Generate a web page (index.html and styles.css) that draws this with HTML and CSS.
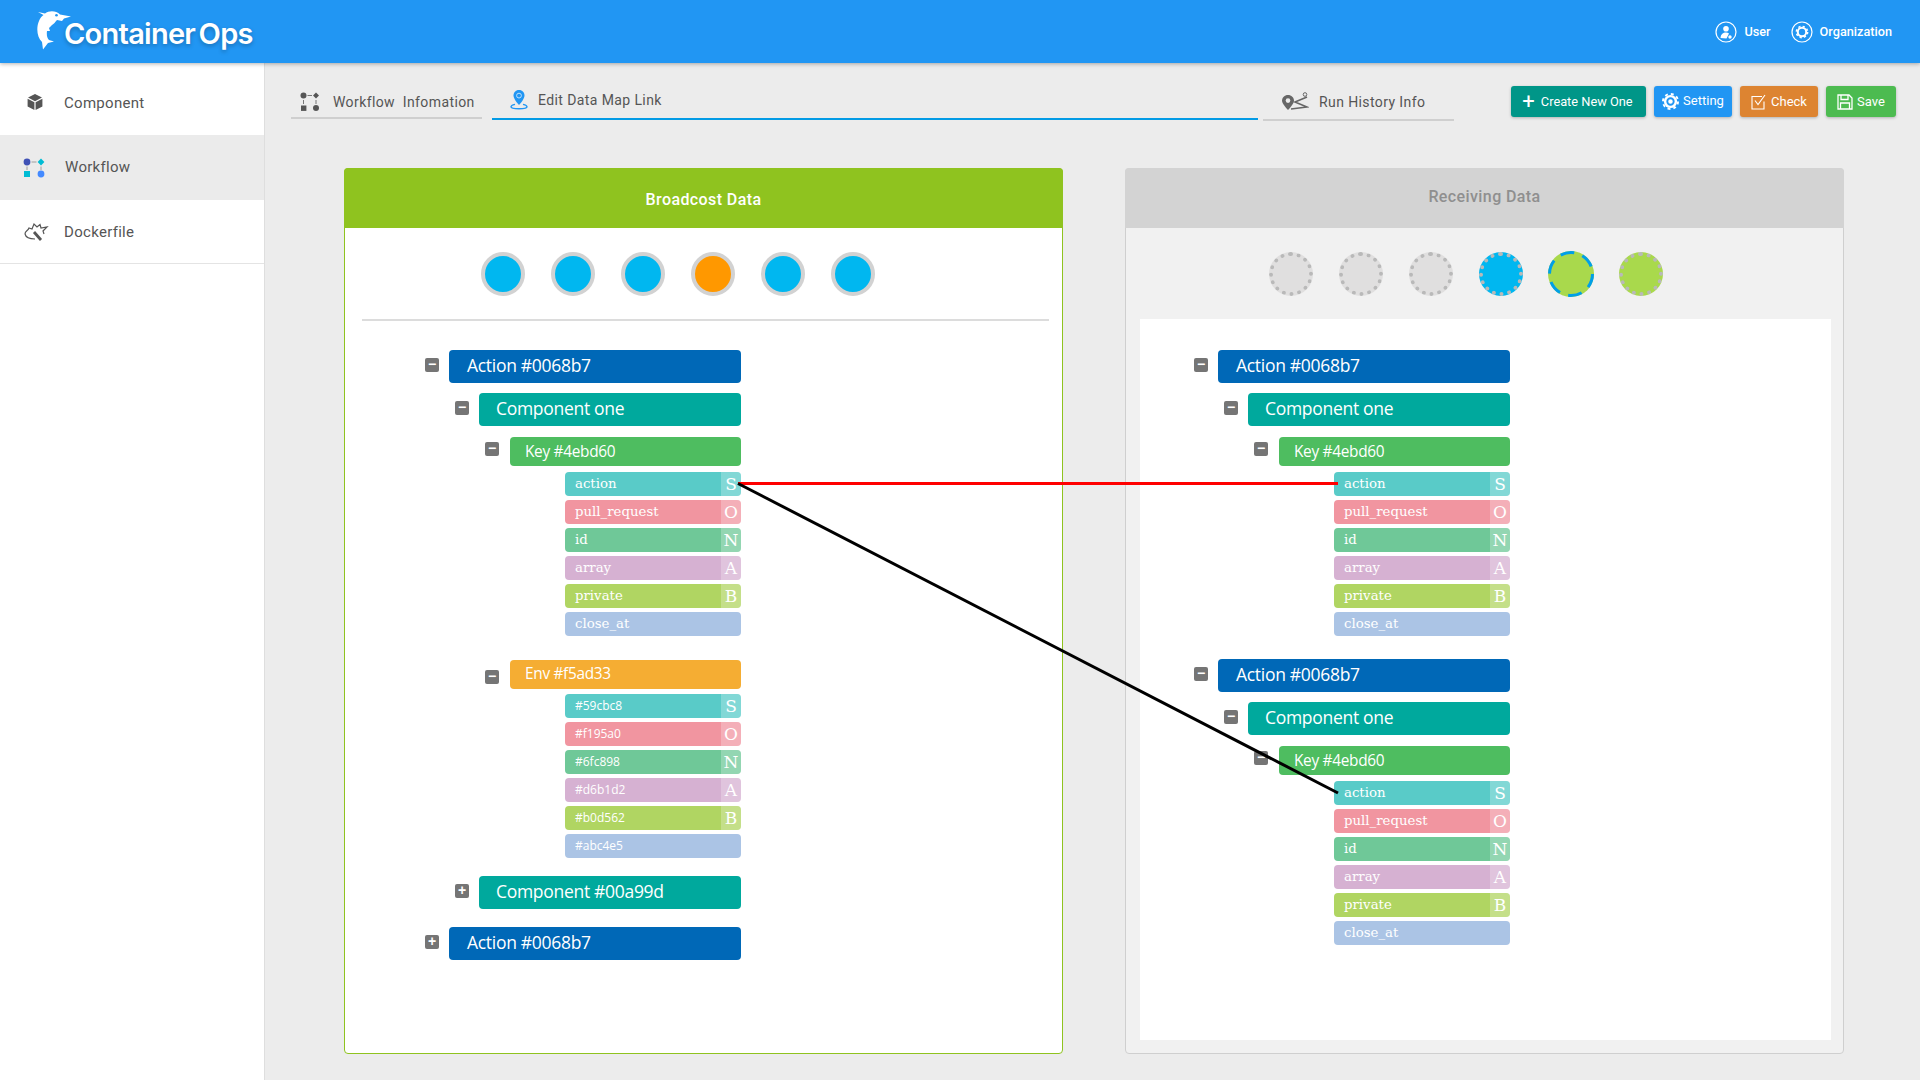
FILE: index.html
```html
<!DOCTYPE html>
<html lang="en">
  <head>
    <meta charset="UTF-8" />
    <title>Container Ops</title>
    <link rel="stylesheet" href="styles.css">
  </head>
  <body>
    <header class="topbar">
      <div class="logo">
        <svg class="logo-mark" viewBox="0 0 34 40" width="34" height="40">
          <path fill="#fff" d="M1 1 L8 2.5 C12 -0.5 19 -0.5 23 3.5 L34 5.5 L27 7.5 L25 10 L20 9 C18 11 17 13 15 14 L12 17 L13 20 L10 20 C9.5 24 10 27 12 29 L17 30.5 L11 32 L6 38.5 L5 31 C0 26 -1 17 2 10 C3 7 5 5 6.5 4 Z" />
          <circle cx="19.5" cy="4.2" r="1.3" fill="#2196f3" />
        </svg>
        <span class="logo-text">Container Ops</span>
      </div>
      <nav class="top-links">
        <a class="top-link">
          <svg viewBox="0 0 22 22" width="22" height="22" fill="none" stroke="#fff" stroke-width="1.2">
            <circle cx="11" cy="11" r="10" />
            <circle cx="11" cy="7.8" r="2.8" fill="#fff" stroke="none" />
            <path d="M5.5 17 C6 13 8 11.6 11 11.6 C12.2 11.6 13.2 12 14 12.6 L11.5 17.6 Z" fill="#fff" stroke="none" />
            <circle cx="15" cy="16" r="1.7" fill="#fff" stroke="none" />
          </svg>
          User
        </a>
        <a class="top-link">
          <svg viewBox="0 0 22 22" width="22" height="22" fill="none" stroke="#fff">
            <circle cx="11" cy="11" r="10" stroke-width="1.2" />
            <circle cx="11" cy="11" r="4.2" stroke-width="2" />
            <circle cx="11" cy="11" r="5.6" stroke-width="1.6" stroke-dasharray="2.2 2.2" />
          </svg>
          Organization
        </a>
      </nav>
    </header>

    <div class="layout">
      <aside class="sidebar">
        <a class="side-item">
          <svg class="side-icon" viewBox="0 0 18 18" width="18" height="18">
            <path fill="#555" d="M9 1 L16 4.6 L9 8.2 L2 4.6 Z M1.6 5.8 L8.4 9.3 L8.4 17 L1.6 13.4 Z M16.4 5.8 L9.6 9.3 L9.6 17 L16.4 13.4 Z" />
          </svg>
          Component
        </a>
        <a class="side-item side-item-active">
          <svg class="side-icon" viewBox="0 0 22 20" width="22" height="20">
            <circle cx="4" cy="4" r="3.4" fill="#3f51b5" />
            <path d="M18 0.6 L21.4 4 L18 7.4 L14.6 4 Z" fill="#00bcd4" />
            <rect x="1" y="13" width="6" height="6" fill="#00bcd4" />
            <circle cx="18" cy="16" r="3.4" fill="#448aff" />
            <path d="M8.5 4 H13.5 M4 8.5 V12 M18 8.5 V12" stroke="#9e9e9e" stroke-width="1" />
          </svg>
          Workflow
        </a>
        <a class="side-item side-item-last">
          <svg class="side-icon" viewBox="0 0 26 20" width="26" height="20" fill="none" stroke="#555" stroke-width="1.2">
            <path d="M2 12 C2 9 5 9 6 6 L9 7 L11 2 L14 5 L17 2.5 L18 6 L24 5 L20 9 L21 12" />
            <path d="M2 12 C3 16 7 17 12 17" />
            <path d="M11 10 L18 18" stroke-width="2.8" />
          </svg>
          Dockerfile
        </a>
      </aside>

      <main class="content">
        <div class="toolbar">
          <a class="tab tab-info">
            <svg viewBox="0 0 20 20" width="20" height="20">
              <circle cx="3.5" cy="3.5" r="3" fill="#555" />
              <path d="M16 0.5 L19 3.5 L16 6.5 L13 3.5 Z" fill="#555" />
              <rect x="1" y="13.5" width="5.4" height="5.4" fill="#555" />
              <circle cx="16" cy="16" r="3" fill="#555" />
              <path d="M7.5 3.5 H12 M3.5 8 V12 M16 8 V12" stroke="#777" stroke-width="1" />
            </svg>
            Workflow&nbsp; Infomation
          </a>
          <a class="tab tab-active">
            <svg viewBox="0 0 18 20" width="18" height="20">
              <path fill="#2196f3" d="M9 0 C5.5 0 3.5 2.6 3.5 5.6 C3.5 9.4 9 15 9 15 C9 15 14.5 9.4 14.5 5.6 C14.5 2.6 12.5 0 9 0 Z" />
              <circle cx="9" cy="5.6" r="2.4" fill="none" stroke="#bfe0fb" stroke-width="1" />
              <path d="M5 14.4 C2.6 15 1 15.8 1 16.8 C1 18 4.6 18.8 9 18.8 C13.4 18.8 17 18 17 16.8 C17 15.8 15.4 15 13 14.4" fill="none" stroke="#2196f3" stroke-width="1.4" />
            </svg>
            Edit Data Map Link
          </a>
          <a class="tab tab-history">
            <svg viewBox="0 0 28 20" width="28" height="20">
              <path fill="#666" d="M7 3 C3.6 3 1 5.6 1 8.8 C1 12 7 18 7 18 C7 18 13 12 13 8.8 C13 5.6 10.4 3 7 3 Z" />
              <circle cx="7" cy="8.6" r="2.3" fill="#ececec" />
              <path d="M10 17 L26 15 L14 10 L26 5" fill="none" stroke="#666" stroke-width="1.6" />
              <circle cx="24" cy="2.5" r="1.8" fill="none" stroke="#666" stroke-width="1" />
            </svg>
            Run History Info
          </a>
          <div class="actions">
            <a class="btn btn-create"><span class="btn-plus">+</span>Create New One</a>
            <a class="btn btn-setting">
              <svg viewBox="0 0 18 18" width="17" height="17">
                <circle cx="9" cy="9" r="7" fill="#fff" />
                <circle cx="9" cy="9" r="8" fill="none" stroke="#fff" stroke-width="2" stroke-dasharray="3.1 3.2" />
                <circle cx="9" cy="9" r="3.4" fill="#fff" stroke="#2196f3" stroke-width="2" />
              </svg>
              <span class="btn-label-up">Setting</span>
            </a>
            <a class="btn btn-check">
              <svg viewBox="0 0 16 16" width="16" height="16" fill="none" stroke="#fff" stroke-width="1.1">
                <path d="M13 7.5 V15 H1 V2.5 H11" />
                <path d="M4 6.5 L7 10.5 L14 1" />
              </svg>
              Check
            </a>
            <a class="btn btn-save">
              <svg viewBox="0 0 16 16" width="16" height="16" fill="none" stroke="#fff" stroke-width="1.3">
                <path d="M1 1 H12 L15 4 V15 H1 Z" />
                <path d="M4 1 V5.5 H11 V1 M3.5 15 V9 H12.5 V15" />
              </svg>
              Save
            </a>
          </div>
        </div>

        <div class="panels">
          <section class="panel panel-send">
            <h2 class="panel-head">Broadcost Data</h2>
            <div class="dots">
              <span class="dot dot-blue"></span>
              <span class="dot dot-blue"></span>
              <span class="dot dot-blue"></span>
              <span class="dot dot-orange"></span>
              <span class="dot dot-blue"></span>
              <span class="dot dot-blue"></span>
            </div>
            <div class="tree">
              <div class="row lvl1"><i class="toggle">&minus;</i><div class="bar bar-action">Action #0068b7</div></div>
              <div class="row lvl2"><i class="toggle">&minus;</i><div class="bar bar-comp">Component one</div></div>
              <div class="row lvl3"><i class="toggle">&minus;</i><div class="bar bar-key">Key #4ebd60</div></div>
              <div class="fields">
                <div class="field f-s"><span>action</span><b>S</b></div>
                <div class="field f-o"><span>pull_request</span><b>O</b></div>
                <div class="field f-n"><span>id</span><b>N</b></div>
                <div class="field f-a"><span>array</span><b>A</b></div>
                <div class="field f-b"><span>private</span><b>B</b></div>
                <div class="field f-c"><span>close_at</span></div>
              </div>
              <div class="row lvl3 row-env"><i class="toggle">&minus;</i><div class="bar bar-env">Env #f5ad33</div></div>
              <div class="fields fields-env">
                <div class="field f-s"><span>#59cbc8</span><b>S</b></div>
                <div class="field f-o"><span>#f195a0</span><b>O</b></div>
                <div class="field f-n"><span>#6fc898</span><b>N</b></div>
                <div class="field f-a"><span>#d6b1d2</span><b>A</b></div>
                <div class="field f-b"><span>#b0d562</span><b>B</b></div>
                <div class="field f-c"><span>#abc4e5</span></div>
              </div>
              <div class="row lvl2 row-closed"><i class="toggle">+</i><div class="bar bar-comp">Component #00a99d</div></div>
              <div class="row lvl1 row-closed"><i class="toggle">+</i><div class="bar bar-action">Action #0068b7</div></div>
            </div>
          </section>

          <section class="panel panel-recv">
            <h2 class="panel-head">Receiving Data</h2>
            <div class="dots">
              <span class="dot dot-empty"></span>
              <span class="dot dot-empty"></span>
              <span class="dot dot-empty"></span>
              <span class="dot dot-empty dot-fill-blue"></span>
              <svg class="dot-ring" viewBox="0 0 46 46" width="46" height="46">
                <circle cx="23" cy="23" r="23" fill="#a9d94c" />
                <circle cx="23" cy="23" r="21.5" fill="none" stroke="#009fe8" stroke-width="3" stroke-dasharray="14 8.5" />
              </svg>
              <span class="dot dot-empty dot-fill-green"></span>
            </div>
            <div class="tree">
              <div class="row lvl1"><i class="toggle">&minus;</i><div class="bar bar-action">Action #0068b7</div></div>
              <div class="row lvl2"><i class="toggle">&minus;</i><div class="bar bar-comp">Component one</div></div>
              <div class="row lvl3"><i class="toggle">&minus;</i><div class="bar bar-key">Key #4ebd60</div></div>
              <div class="fields">
                <div class="field f-s"><span>action</span><b>S</b></div>
                <div class="field f-o"><span>pull_request</span><b>O</b></div>
                <div class="field f-n"><span>id</span><b>N</b></div>
                <div class="field f-a"><span>array</span><b>A</b></div>
                <div class="field f-b"><span>private</span><b>B</b></div>
                <div class="field f-c"><span>close_at</span></div>
              </div>
              <div class="row lvl1 row-second"><i class="toggle">&minus;</i><div class="bar bar-action">Action #0068b7</div></div>
              <div class="row lvl2"><i class="toggle">&minus;</i><div class="bar bar-comp">Component one</div></div>
              <div class="row lvl3"><i class="toggle">&minus;</i><div class="bar bar-key">Key #4ebd60</div></div>
              <div class="fields">
                <div class="field f-s"><span>action</span><b>S</b></div>
                <div class="field f-o"><span>pull_request</span><b>O</b></div>
                <div class="field f-n"><span>id</span><b>N</b></div>
                <div class="field f-a"><span>array</span><b>A</b></div>
                <div class="field f-b"><span>private</span><b>B</b></div>
                <div class="field f-c"><span>close_at</span></div>
              </div>
            </div>
          </section>
        </div>
      </main>
    </div>

    <!-- links between the two trees -->
    <svg class="links" width="1920" height="1080" viewBox="0 0 1920 1080">
      <line x1="738" y1="483.5" x2="1338" y2="483.5" stroke="#f00" stroke-width="3" />
      <line x1="738" y1="483.5" x2="1338" y2="793" stroke="#000" stroke-width="3" />
    </svg>
  </body>
</html>
```

FILE: styles.css
```css
/* page */
html,
body {
  margin: 0;
  padding: 0;
  height: 1080px;
  overflow: hidden;
}

body {
  position: relative;
  font-family: Roboto, sans-serif;
  background-color: #ececec;
  color: #555;
}

a {
  color: inherit;
  text-decoration: none;
}

/* top bar */
.topbar {
  position: relative;
  z-index: 2;
  height: 63px;
  background-color: #2196f3;
  box-shadow: 0 1px 4px rgba(0, 0, 0, 0.3);
  display: flex;
  align-items: center;
  justify-content: space-between;
}

.logo {
  display: flex;
  align-items: flex-start;
  padding-left: 37px;
  height: 63px;
}

.logo-mark {
  margin-top: 11px;
}

.logo-text {
  margin: 15px 0 0 -7px;
  font-family: Inter, sans-serif;
  font-size: 29px;
  font-weight: 600;
  line-height: 38px;
  letter-spacing: -0.75px;
  word-spacing: -3px;
  color: #fff;
  text-shadow: 0 2px 4px rgba(0, 0, 0, 0.25);
}

.top-links {
  display: flex;
  gap: 20px;
  padding-right: 28px;
}

.top-link {
  display: flex;
  align-items: center;
  gap: 7px;
  color: #fff;
  font-size: 12.7px;
  font-weight: 500;
}

/* sidebar */
.layout {
  display: flex;
  height: 1017px;
}

.sidebar {
  width: 265px;
  flex-shrink: 0;
  background-color: #fff;
  border-right: 1px solid #dedede;
  box-sizing: border-box;
}

.side-item {
  display: flex;
  align-items: center;
  height: 65px;
  font-size: 15px;
  letter-spacing: 0.3px;
  position: relative;
  padding-left: 64px;
}

.side-item:first-child {
  height: 72px;
  padding-top: 8px;
  box-sizing: border-box;
}

.side-item-active {
  background-color: #ebebeb;
  padding-left: 65px;
  padding-bottom: 2px;
  height: 63px;
}

.side-item-last {
  border-bottom: 1px solid #e4e4e4;
  padding-top: 1px;
  box-sizing: border-box;
  height: 64px;
}

.side-icon {
  position: absolute;
  left: 35px;
  top: 50%;
  transform: translateY(-50%);
}

.side-item:first-child .side-icon {
  top: 54%;
  left: 26px;
}

.side-item-active .side-icon {
  left: 23px;
}

.side-item-last .side-icon {
  left: 23px;
}

/* tabs and buttons */
.content {
  flex: 1;
  padding-left: 26px;
}

.toolbar {
  display: flex;
  height: 105px;
  box-sizing: border-box;
  padding-top: 23px;
  align-items: flex-start;
}

.tab {
  display: flex;
  align-items: center;
  box-sizing: border-box;
  height: 33px;
  font-size: 14px;
  letter-spacing: 0.4px;
  border-bottom: 2px solid #cfcfcf;
}

.tab-info {
  width: 191px;
  padding-left: 9px;
  gap: 13px;
}

.tab-active {
  width: 766px;
  margin: 0 0 0 10px;
  padding: 0 0 4px 18px;
  height: 34px;
  gap: 10px;
  border-bottom-color: #039be5;
}

.tab-history {
  width: 191px;
  margin-left: 5px;
  padding: 0 0 2px 18px;
  gap: 10px;
  height: 35px;
}

.actions {
  display: flex;
  gap: 8px;
  margin-left: 57px;
}

.btn {
  display: flex;
  align-items: center;
  justify-content: center;
  gap: 4px;
  height: 31px;
  border-radius: 3px;
  color: #fff;
  font-size: 13px;
  box-shadow: 0 1px 3px rgba(0, 0, 0, 0.25);
}

.btn-label-up {
  margin-top: -3px;
}

.btn-plus {
  font-size: 22px;
  line-height: 22px;
  margin-right: 2px;
}

.btn-create {
  width: 135px;
  padding-right: 2px;
  box-sizing: border-box;
  font-size: 12.8px;
  background-color: #009688;
}

.btn-setting {
  width: 78px;
  background-color: #2196f3;
}

.btn-check {
  width: 78px;
  background-color: #dd8431;
}

.btn-save {
  width: 70px;
  background-color: #4cbb50;
}

/* panels */
.panels {
  display: flex;
  gap: 62px;
  margin-left: 53px;
}

.panel {
  width: 719px;
  height: 886px;
  box-sizing: border-box;
  border-radius: 4px;
  border: 1px solid #8fc31f;
  background-color: #fff;
}

.panel-head {
  margin: -1px -1px 0;
  height: 60px;
  border-radius: 4px 4px 0 0;
  font-size: 16px;
  font-weight: 500;
  letter-spacing: 0.4px;
  line-height: 63px;
  text-align: center;
  color: #fff;
  background-color: #8fc31f;
}

.panel-recv {
  border-color: #cfcfcf;
  background-color: #f1f1f1;
  position: relative;
}

.panel-recv .panel-head {
  height: 60px;
  line-height: 58px;
  color: #8f8f8f;
  background-color: #d3d3d3;
}

.dots {
  display: flex;
  align-items: center;
  gap: 26px;
  padding: 24px 0 0 136px;
  height: 67px;
  box-sizing: content-box;
  margin: 0 13px 0 17px;
}

.panel-send .dots {
  padding-left: 119px;
  border-bottom: 2px solid #dcdcdc;
  margin-bottom: 29px;
  align-items: flex-start;
}

.panel-recv .dots {
  padding-left: 126px;
  height: 44px;
  padding-bottom: 23px;
  margin: 0 0 0 17px;
}

.dot {
  width: 44px;
  height: 44px;
  flex-shrink: 0;
  box-sizing: border-box;
  border-radius: 50%;
  border: 4px solid #d2d2d2;
}

.dot-blue {
  background-color: #00b7f0;
}

.dot-orange {
  background-color: #ff9800;
}

.dot-empty {
  border: 4px dotted #b9b9b9;
  background-color: #e0dfdf;
}

.dot-fill-blue {
  background-color: #00b7f0;
}

.dot-fill-green {
  background-color: #a9d94c;
}

.dot-ring {
  flex-shrink: 0;
  margin: 0 -1px;
}

/* trees */
.panel-send .tree {
  padding-left: 80px;
  width: 316px;
}

.panel-recv .tree {
  margin: 0 12px 0 14px;
  background-color: #fff;
  height: 721px;
  box-sizing: border-box;
  padding: 31px 0 0 54px;
}

.row {
  display: flex;
  align-items: flex-start;
  margin-top: 10px;
  width: 316px;
  box-sizing: border-box;
}

.lvl1 {
  margin-top: 0;
}

.lvl2 {
  padding-left: 30px;
}

.lvl3 {
  padding-left: 60px;
  margin-top: 11px;
}

.row-env {
  margin-top: 24px;
}

.row-closed {
  margin-top: 18px;
}

.row-second {
  margin-top: 23px;
}

.toggle {
  width: 14px;
  height: 14px;
  flex-shrink: 0;
  margin: 8px 10px 0 0;
  border-radius: 2px;
  background-color: #757575;
  color: #fff;
  font-family: "Liberation Sans", sans-serif;
  font-style: normal;
  font-weight: 700;
  font-size: 14px;
  line-height: 13px;
  text-align: center;
}

.lvl3 .toggle {
  margin: 5px 11px 0 0;
}

.row-env .toggle {
  margin-top: 10px;
}

.bar {
  flex: 1;
  height: 33px;
  box-sizing: border-box;
  padding-left: 17px;
  border-radius: 4px;
  color: #fff;
  font-family: "Open Sans", sans-serif;
  font-size: 17.5px;
  line-height: 30px;
  letter-spacing: -0.3px;
}

.bar-action {
  background-color: #0068b7;
  padding-left: 18px;
}

.bar-comp {
  background-color: #00a99d;
}

.bar-key {
  height: 29px;
  padding-left: 15px;
  font-size: 15.4px;
  line-height: 30px;
  background-color: #4ebd60;
}

.bar-env {
  height: 29px;
  padding-left: 15px;
  font-size: 15.4px;
  line-height: 28px;
  background-color: #f5ad33;
}

.fields {
  display: flex;
  flex-direction: column;
  gap: 4px;
  margin: 6px 0 0 140px;
  width: 176px;
}

.fields-env {
  margin-top: 5px;
}

.field {
  display: flex;
  height: 24px;
  border-radius: 4px;
  overflow: hidden;
  color: #fff;
  font-family: "DejaVu Serif", serif;
  font-size: 13.3px;
  line-height: 24px;
}

.field span {
  flex: 1;
  padding-left: 10px;
}

.field b {
  width: 20px;
  font-weight: 400;
  font-size: 17px;
  text-align: center;
  background-color: rgba(255, 255, 255, 0.25);
}

.fields-env .field span {
  font-family: "Open Sans", sans-serif;
  font-size: 12px;
}

.f-s { background-color: #59cbc8; }
.f-o { background-color: #f195a0; }
.f-n { background-color: #6fc898; }
.f-a { background-color: #d6b1d2; }
.f-b { background-color: #b0d562; }
.f-c { background-color: #abc4e5; }

/* connector lines lie over both panels */
.links {
  position: absolute;
  top: 0;
  left: 0;
  z-index: 3;
  pointer-events: none;
}
```
